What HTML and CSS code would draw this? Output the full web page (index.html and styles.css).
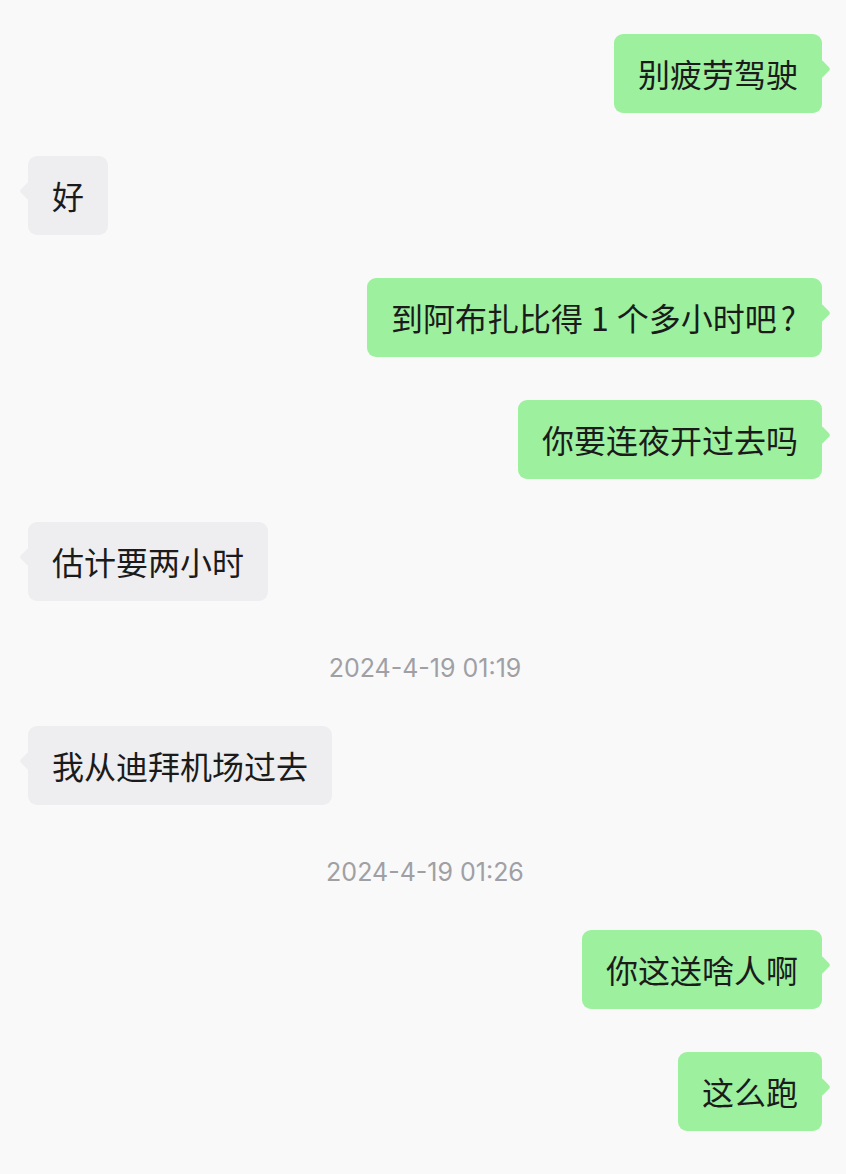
FILE: index.html
```html
<!DOCTYPE html>
<html lang="zh-CN">
<head>
  <meta charset="UTF-8">
  <meta name="viewport" content="width=device-width, initial-scale=1.0">
  <title>聊天记录</title>
  <link rel="stylesheet" href="styles.css">
</head>
<body>
  <div class="chat">
    <div class="msg mine"><div class="bubble">别疲劳驾驶</div></div>
    <div class="msg theirs"><div class="bubble">好</div></div>
    <div class="msg mine"><div class="bubble">到阿布扎比得<span class="latin">1</span>个多小时吧<span class="punct">?</span></div></div>
    <div class="msg mine"><div class="bubble">你要连夜开过去吗</div></div>
    <div class="msg theirs"><div class="bubble">估计要两小时</div></div>

    <div class="time">2024-4-19 01:19</div>
    <div class="msg theirs"><div class="bubble">我从迪拜机场过去</div></div>

    <div class="time">2024-4-19 01:26</div>
    <div class="msg mine"><div class="bubble">你这送啥人啊</div></div>
    <div class="msg mine"><div class="bubble">这么跑</div></div>
  </div>
</body>
</html>
```

FILE: styles.css
```css
body {
  margin: 0;
  background: #f9f9f9;
  font-family: "Noto Sans CJK SC", "Noto Sans", sans-serif;
  color: #1b1b1b;
}

.chat {
  display: flex;
  flex-direction: column;
  gap: 43px;
  padding: 34px 24px 40px 28px;
}

.msg {
  display: flex;
}

.msg.mine {
  justify-content: flex-end;
}

.bubble {
  position: relative; /* anchor for the tail */
  padding: 18px 24px;
  font-size: 32px;
  line-height: 43px;
  border-radius: 9px;
}

/* spacing round latin chars inside chinese text */
.latin {
  padding: 0 8px;
}

.punct {
  padding: 0 2px 0 4px;
}

/* little rounded tail beside the bubble */
.bubble::before {
  content: "";
  position: absolute;
  top: 28px;
  width: 14px;
  height: 14px;
  border-radius: 3px;
  transform: rotate(45deg);
}

.mine .bubble {
  background: #9df19e;
}

.mine .bubble::before {
  right: -6px;
  background: #9df19e;
}

.theirs .bubble {
  background: #eeeef0;
}

.theirs .bubble::before {
  left: -6px;
  background: #eeeef0;
}

.time {
  margin-top: 9px;
  text-align: center;
  font-family: Inter, "Noto Sans", sans-serif;
  font-size: 25px;
  line-height: 30px;
  color: #a0a0a4;
}
```
